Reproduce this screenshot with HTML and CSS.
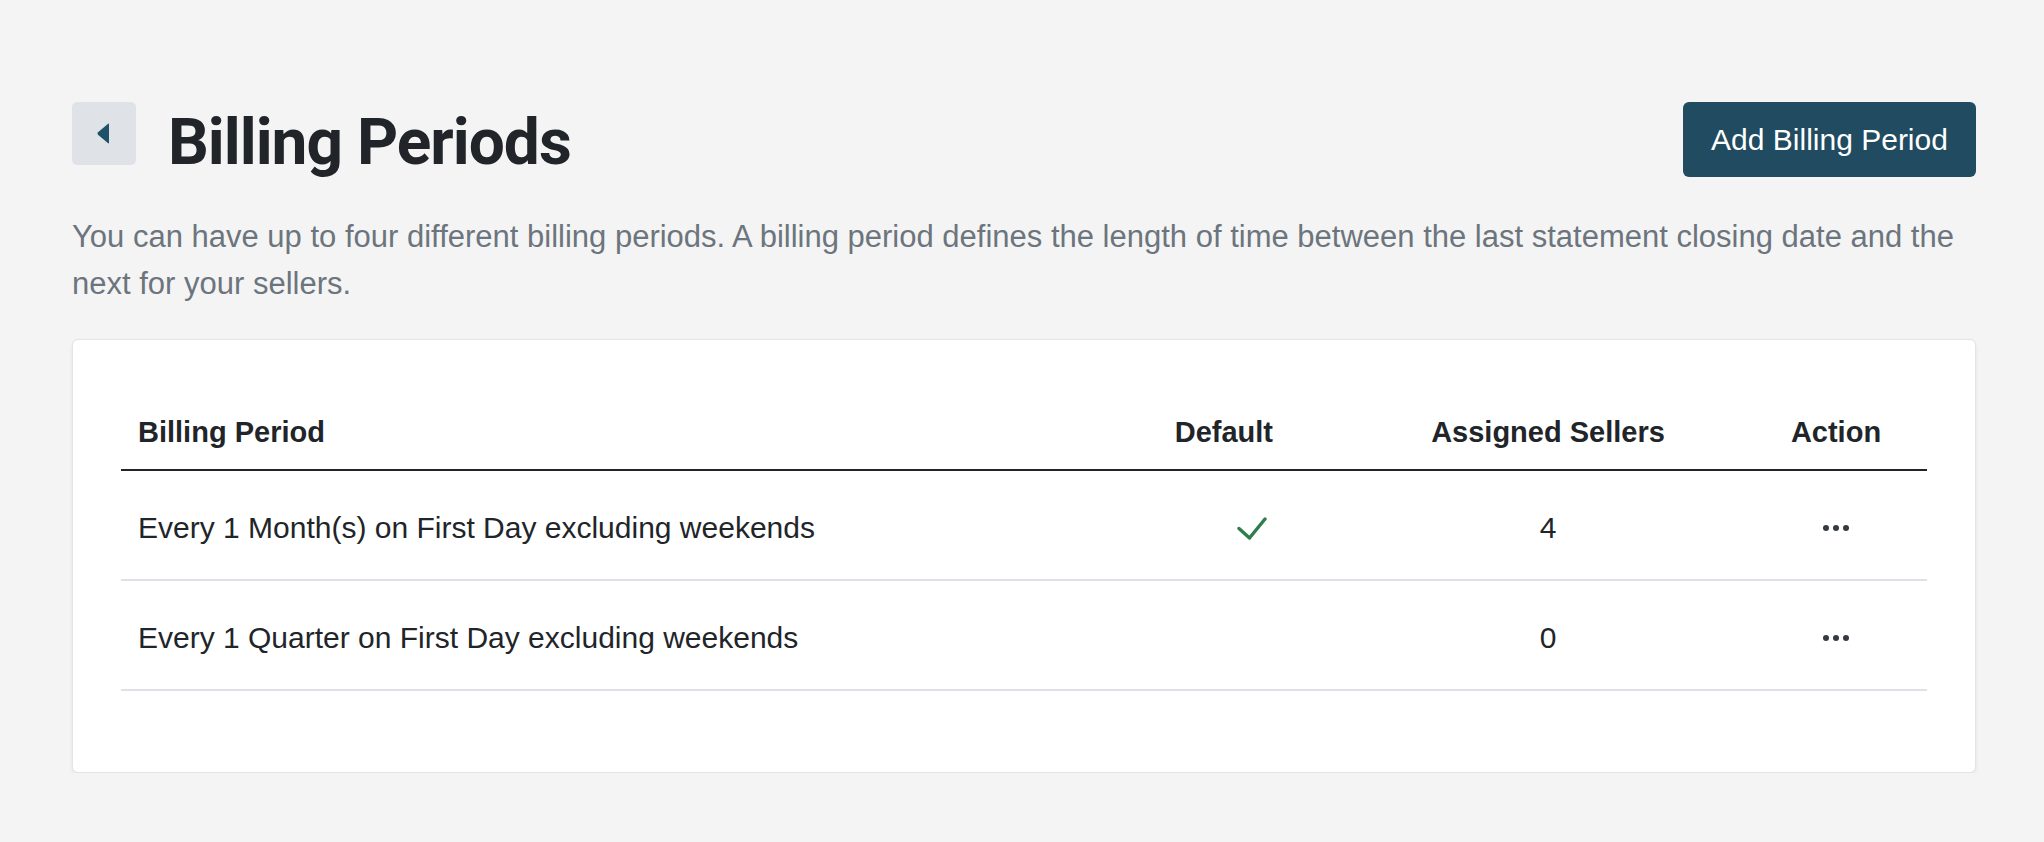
FILE: index.html
```html
<!DOCTYPE html>
<html lang="en">
<head>
<meta charset="utf-8">
<title>Billing Periods</title>
<link rel="stylesheet" href="styles.css">
</head>
<body>
<div class="page">
  <header class="page-header">
    <div class="title-group">
      <button class="back-btn" aria-label="Back">
        <svg width="13" height="21" viewBox="0 0 13 21"><path d="M12 1.6 L12 19.4 Q12 21 10.8 20 L1 11.8 Q0 10.5 1 9.2 L10.8 1 Q12 0 12 1.6 Z" fill="#1f5169"/></svg>
      </button>
      <h1 class="title">Billing Periods</h1>
    </div>
    <button class="primary-btn">Add Billing Period</button>
  </header>
  <p class="description">You can have up to four different billing periods. A billing period defines the length of time between the last statement closing date and the next for your sellers.</p>
  <section class="card">
    <div class="table">
      <div class="row head">
        <div class="cell c-name">Billing Period</div>
        <div class="cell c-default">Default</div>
        <div class="cell c-sellers">Assigned Sellers</div>
        <div class="cell c-action">Action</div>
      </div>
      <div class="row">
        <div class="cell c-name">Every 1 Month(s) on First Day excluding weekends</div>
        <div class="cell c-default check-cell">
          <svg class="check" width="30" height="23" viewBox="0 0 30 23"><polyline points="2,11.5 12.5,21 28,2" fill="none" stroke="#2f7d4f" stroke-width="3.4" stroke-linecap="round" stroke-linejoin="round"/></svg>
        </div>
        <div class="cell c-sellers">4</div>
        <div class="cell c-action">
          <svg class="dots" width="26" height="6" viewBox="0 0 26 6"><circle cx="3" cy="3" r="3" fill="#343a40"/><circle cx="13" cy="3" r="3" fill="#343a40"/><circle cx="23" cy="3" r="3" fill="#343a40"/></svg>
        </div>
      </div>
      <div class="row">
        <div class="cell c-name">Every 1 Quarter on First Day excluding weekends</div>
        <div class="cell c-default check-cell"></div>
        <div class="cell c-sellers">0</div>
        <div class="cell c-action">
          <svg class="dots" width="26" height="6" viewBox="0 0 26 6"><circle cx="3" cy="3" r="3" fill="#343a40"/><circle cx="13" cy="3" r="3" fill="#343a40"/><circle cx="23" cy="3" r="3" fill="#343a40"/></svg>
        </div>
      </div>
    </div>
  </section>
</div>
</body>
</html>
```

FILE: styles.css
```css
* { box-sizing: border-box; }

html, body {
  margin: 0;
  padding: 0;
  background: #f4f4f4;
}

body {
  font-family: "Liberation Sans", Arial, sans-serif;
  color: #212529;
}

.page {
  padding: 102px 68px 0 72px;
}

.page-header {
  display: flex;
  justify-content: space-between;
  align-items: flex-start;
}

.title-group {
  display: flex;
  align-items: flex-start;
  gap: 32px;
}

.back-btn {
  width: 64px;
  height: 63px;
  border: none;
  border-radius: 5px;
  background: #dfe3e8;
  display: flex;
  align-items: center;
  justify-content: center;
  padding: 0 2px 0 0;
  cursor: pointer;
}

.back-btn svg { display: block; }

.title {
  margin: 9px 0 0 0;
  font-family: Roboto, "Liberation Sans", sans-serif;
  font-weight: 700;
  font-size: 64px;
  line-height: 64px;
  letter-spacing: -1px;
  color: #212529;
}

.primary-btn {
  width: 293px;
  height: 75px;
  border: none;
  border-radius: 6px;
  background: #204b60;
  color: #ffffff;
  font-family: "Liberation Sans", Arial, sans-serif;
  font-size: 30px;
  padding: 0;
  cursor: pointer;
}

.description {
  margin: 36px 0 0 0;
  font-size: 31px;
  line-height: 47px;
  color: #6c757d;
}

.card {
  margin-top: 32px;
  background: #ffffff;
  border: 1px solid #e1e4e8;
  border-radius: 6px;
  box-shadow: 0 2px 4px rgba(0, 0, 0, 0.07);
  padding: 49px 48px 81px 48px;
}

.table {
  display: flex;
  flex-direction: column;
}

.row {
  display: grid;
  grid-template-columns: 1fr 230px 394px 182px;
  border-bottom: 2px solid #dee2e6;
}

.row.head {
  border-bottom: 2px solid #212529;
}

.cell {
  font-size: 30px;
  line-height: 34px;
  padding-top: 40px;
  padding-bottom: 34px;
  color: #212529;
  display: flex;
  align-items: center;
}

.head .cell {
  font-size: 29px;
  font-weight: 700;
  padding-top: 26px;
  padding-bottom: 20px;
}

.c-name { padding-left: 17px; }

.c-default {
  justify-content: flex-end;
  padding-right: 78px;
}

.check-cell { padding-right: 84px; }

.c-sellers { justify-content: center; }

.c-action { justify-content: center; }

.check { display: block; }
.dots { display: block; }
```
